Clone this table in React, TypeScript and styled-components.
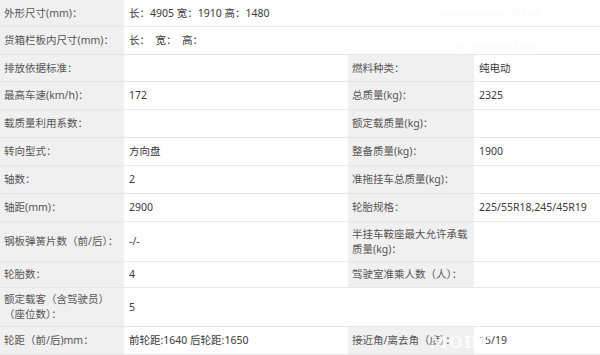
import React from "react";
import styled, { createGlobalStyle } from "styled-components";

const GlobalStyle = createGlobalStyle`
  html, body {
    margin: 0;
    padding: 0;
    background: #ffffff;
  }
  body {
    font-family: "Noto Sans", "Noto Sans CJK SC", sans-serif;
    font-size: 10.5px;
    color: #333333;
    overflow: hidden;
  }
`;

const Sheet = styled.div`
  position: relative;
  width: 600px;
  height: 355px;
  overflow: hidden;
  background: #ffffff;
`;

const Row = styled.div<{ $h: number }>`
  display: grid;
  grid-template-columns: 124px 224px 126px 1fr;
  height: ${({ $h }) => $h}px;
  box-sizing: border-box;
  border-bottom: 1px solid #e8e8e8;
`;

const Label = styled.div`
  display: flex;
  align-items: center;
  padding: 0 4px;
  background: #f0f0f0;
  color: #555555;
  line-height: 15px;
  white-space: pre;
  overflow: visible;
`;

const Value = styled.div<{ $wide?: boolean }>`
  display: flex;
  align-items: center;
  padding: 0 5px;
  color: #3a3a3a;
  line-height: 15px;
  white-space: pre;
  grid-column: ${({ $wide }) => ($wide ? "span 3" : "auto")};
`;

const Watermark = styled.div`
  position: absolute;
  left: 430px;
  top: 333px;
  font-family: "DejaVu Serif", serif;
  font-weight: bold;
  font-size: 16px;
  letter-spacing: 1px;
  color: rgba(255, 255, 255, 0.85);
  pointer-events: none;
`;

const FaintMark = styled.div<{ $top: number; $left: number }>`
  position: absolute;
  top: ${({ $top }) => $top}px;
  left: ${({ $left }) => $left}px;
  font-size: 10px;
  color: rgba(0, 0, 0, 0.04);
  filter: blur(1px);
  pointer-events: none;
`;

type Cell = { label: string; value: string };
type Line = { h: number; left: Cell; right?: Cell };

const lines: Line[] = [
  { h: 27, left: { label: "外形尺寸(mm)：", value: "长：4905 宽：1910 高：1480" } },
  { h: 28, left: { label: "货箱栏板内尺寸(mm)：", value: "长：  宽：  高：" } },
  { h: 27, left: { label: "排放依据标准：", value: "" }, right: { label: "燃料种类：", value: "纯电动" } },
  { h: 28, left: { label: "最高车速(km/h)：", value: "172" }, right: { label: "总质量(kg)：", value: "2325" } },
  { h: 28, left: { label: "载质量利用系数：", value: "" }, right: { label: "额定载质量(kg)：", value: "" } },
  { h: 28, left: { label: "转向型式：", value: "方向盘" }, right: { label: "整备质量(kg)：", value: "1900" } },
  { h: 28, left: { label: "轴数：", value: "2" }, right: { label: "准拖挂车总质量(kg)：", value: "" } },
  { h: 28, left: { label: "轴距(mm)：", value: "2900" }, right: { label: "轮胎规格：", value: "225/55R18,245/45R19" } },
  { h: 40, left: { label: "钢板弹簧片数（前/后）：", value: "-/-" }, right: { label: "半挂车鞍座最大允许承载\n质量(kg)：", value: "" } },
  { h: 26, left: { label: "轮胎数：", value: "4" }, right: { label: "驾驶室准乘人数（人）：", value: "" } },
  { h: 39, left: { label: "额定载客（含驾驶员）\n（座位数）：", value: "5" } },
  { h: 28, left: { label: "轮距（前/后)mm：", value: "前轮距:1640 后轮距:1650" }, right: { label: "接近角/离去角（度）：", value: "15/19" } },
];

export default function App() {
  return (
    <Sheet>
      <GlobalStyle />
      {lines.map((line, i) => (
        <Row key={i} $h={line.h}>
          <Label>{line.left.label}</Label>
          <Value $wide={!line.right}>{line.left.value}</Value>
          {line.right && (
            <>
              <Label>{line.right.label}</Label>
              <Value>{line.right.value}</Value>
            </>
          )}
        </Row>
      ))}
      <FaintMark $top={6} $left={440}>www.xxxxxxxxMIT.cn</FaintMark>
      <FaintMark $top={38} $left={455}>xx xxxxxxxx  x  xxx</FaintMark>
      <Watermark>MODE</Watermark>
    </Sheet>
  );
}
